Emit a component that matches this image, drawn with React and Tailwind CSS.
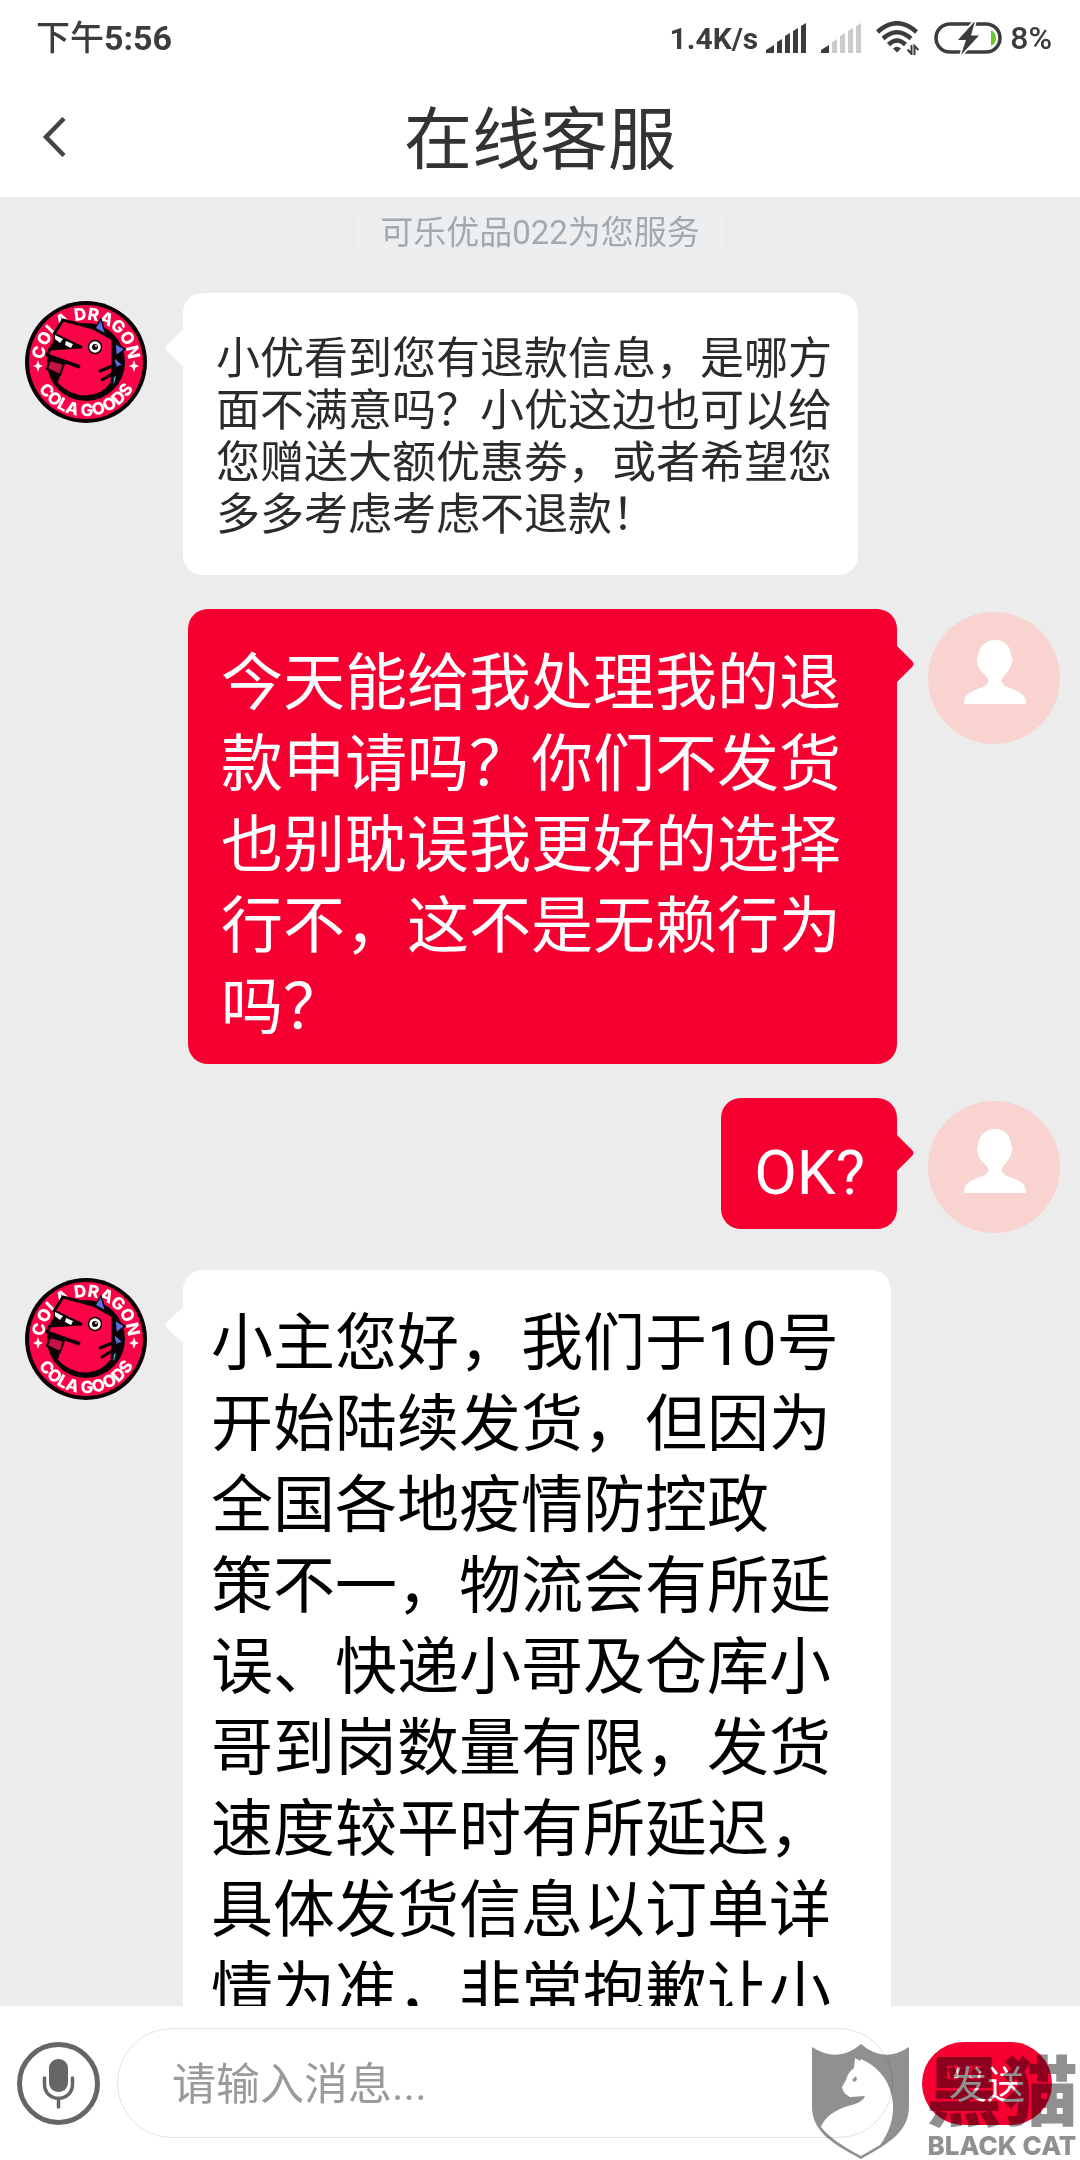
const noticeLines = ["小优看到您有退款信息，是哪方", "面不满意吗？小优这边也可以给", "您赠送大额优惠劵，或者希望您", "多多考虑考虑不退款！"];

const complaintLines = ["今天能给我处理我的退", "款申请吗？你们不发货", "也别耽误我更好的选择", "行不，这不是无赖行为", "吗？"];

const replyLines = [
  "小主您好，我们于10号",
  "开始陆续发货，但因为",
  "全国各地疫情防控政",
  "策不一，物流会有所延",
  "误、快递小哥及仓库小",
  "哥到岗数量有限，发货",
  "速度较平时有所延迟，",
  "具体发货信息以订单详",
  "情为准，非常抱歉让小",
];

const Lines = ({ lines }) => (
  <p>
    {lines.map((line) => (
      <span key={line} className="block whitespace-nowrap">
        {line}
      </span>
    ))}
  </p>
);

const Signal = ({ weak }) => (
  <svg className="h-[30px] w-10" viewBox="0 0 40 30" fill="#3c3c3c" aria-hidden="true">
    <path d="M0 30V27L8 22V30Z" />
    <g fill={weak ? "#cbcbcb" : "#3c3c3c"}>
      <path d="M11 30V19L16 16V30Z" />
      <path d="M19 30V13L24 10V30Z" />
      <path d="M27 30V8L32 5V30Z" />
      <path d="M35 30V3L40 0V30Z" />
    </g>
  </svg>
);

const Wifi = () => (
  <svg className="h-[34px] w-11" viewBox="0 0 44 34" fill="none" stroke="#3c3c3c" strokeWidth="4.500" aria-hidden="true">
    <path d="M1.500 11Q21 -6.500 40.500 11" />
    <path d="M7 17.500Q21 5 35 17.500" />
    <path d="M12.500 23.500Q21 15.500 29.500 23.500" />
    <path d="M17 27.500Q21 24 25 27.500L21 31.500Z" fill="#3c3c3c" stroke="none" />
    <path d="M35.500 24V33L31.500 28.500M38.500 34V25L42.500 29" strokeWidth="2" />
  </svg>
);

const Battery = () => (
  <svg className="h-8 w-[68px]" viewBox="0 0 68 32" aria-hidden="true">
    <rect x="2" y="2" width="64" height="28" rx="14" fill="none" stroke="#3c3c3c" strokeWidth="3.500" />
    <path d="M57 8Q62 10.500 62 16T57 24Z" fill="#6cc62f" />
    <path d="M41 -1L24 18H32L27 33L45 13.500H37Z" fill="#3c3c3c" stroke="#fff" strokeWidth="3.500" paintOrder="stroke" />
  </svg>
);

const DragonAvatar = () => (
  <svg className="size-[122px] shrink-0" viewBox="0 0 122 122" role="img" aria-label="Cola Dragon">
    <defs>
      <path id="ringTop" d="M19.300 66A42 42 0 1 1 102.700 66" />
      <path id="ringBottom" d="M6.700 56A54.500 54.500 0 1 0 115.300 56" />
    </defs>
    <circle cx="61" cy="61" r="61" fill="#0b0208" />
    <circle cx="61" cy="61" r="57" fill="#fb0347" />
    <circle cx="61" cy="61" r="39" fill="#0b0208" />
    <g fill="#fff" fontFamily="Inter, sans-serif" fontWeight="800" fontSize="17" textAnchor="middle">
      <text>
        <textPath href="#ringTop" startOffset="50%">COLA DRAGON</textPath>
      </text>
      <text>
        <textPath href="#ringBottom" startOffset="50%">COLA GOODS</textPath>
      </text>
    </g>
    <path d="M68 30L76 18L81 34ZM90 42L100 48L91 55ZM89 56L98 64L90 67Z" fill="#5d6fe0" stroke="#0b0208" strokeWidth="1.500" />
    <path d="M86 78L91 75L89 83Z" fill="#36b8cf" />
    <path d="M38 19L29 33L56 46L25 48L22 54L38 61L31 82Q44 96 61 96Q78 95 87 82L88 62L88 38L68 27Z" fill="#fb0347" stroke="#0b0208" strokeWidth="3" strokeLinejoin="round" />
    <path d="M29 33L56 46L28 47Z" fill="#0b0208" />
    <path d="M30 34L38 38L35 42L30 38ZM41 40L48 43L46 47L40 44Z" fill="#fff" />
    <path d="M24 55L55 66" fill="none" stroke="#0b0208" strokeWidth="3.500" />
    <path d="M25 59L39 63L35 74L22 68Z" fill="#c41146" stroke="#0b0208" strokeWidth="2" />
    <path d="M90 64L75 70M92 70L77 79" fill="none" stroke="#0b0208" strokeWidth="3" strokeLinecap="round" />
    <circle cx="70" cy="46" r="6.500" fill="#fff" stroke="#0b0208" strokeWidth="1.500" />
    <circle cx="70" cy="46" r="3" fill="#0b0208" />
    <circle cx="71" cy="45" r="1" fill="#fff" />
    <path d="M13 59L14.500 63.500L18 65L14.500 66.500L13 71L11.500 66.500L8 65L11.500 63.500ZM109 59L110.500 63.500L114 65L110.500 66.500L109 71L107.500 66.500L104 65L107.500 63.500Z" fill="#fff" />
  </svg>
);

const UserAvatar = () => (
  <svg className="mt-[3px] size-[132px] shrink-0" viewBox="0 0 132 132" role="img" aria-label="我">
    <circle cx="66" cy="66" r="66" fill="#f8d3d0" />
    <path d="M67 28C77 28 83 35 83 44Q86 48 83 53C81 60 77 62 74 67Q72 70 77 74C88 79 98 80 98 92H36C36 80 46 79 57 74Q62 70 60 67C57 62 52 60 50 53Q48 48 50 44C51 35 57 28 67 28Z" fill="#fff" />
  </svg>
);

const AgentMessage = ({ children, className }) => (
  <div className="flex items-start gap-9 pt-[3px] pl-[25px]">
    <div className="pt-2">
      <DragonAvatar />
    </div>
    <div className={`relative rounded-[20px] bg-white ${className}`}>
      <svg className="absolute top-9 -left-[18px] h-[38px] w-[19px]" viewBox="0 0 19 38" fill="#fff" aria-hidden="true">
        <path d="M19 0L2 16Q-1 19 2 22L19 38Z" />
      </svg>
      {children}
    </div>
  </div>
);

const UserMessage = ({ children, className }) => (
  <div className="flex items-start justify-end gap-[31px] pr-5">
    <div className={`relative rounded-[20px] bg-[#f50031] pb-4 text-[62px] leading-[81px] text-white ${className}`}>
      <svg className="absolute top-9 -right-[17px] h-[38px] w-[18px]" viewBox="0 0 18 38" fill="#f50031" aria-hidden="true">
        <path d="M0 0L16 16Q19 19 16 22L0 38Z" />
      </svg>
      {children}
    </div>
    <UserAvatar />
  </div>
);

const Watermark = () => (
  <div className="pointer-events-none absolute right-0 bottom-0 flex items-end gap-4 pr-[2px] mix-blend-multiply">
    <svg className="h-[116px] w-[98px]" viewBox="0 0 98 116" fill="#918f90" aria-hidden="true">
      <path
        fillRule="evenodd"
        d="M0 3Q26 20 49 0Q72 20 97 3V62C97 86 80 98 49 115C17 98 0 86 0 62ZM43 14L42 24Q36 28 34 36L30 43Q31 50 38 53L53 52Q51 59 36 62Q14 69 9 83Q20 97 49 112L68 101Q82 82 81 60Q78 28 49 15L48 17Z"
      />
      <path d="M40 36L44 32L45 36L42 38Z" />
    </svg>
    <div className="flex flex-col items-center text-[#918f90]">
      <span className="text-[76px] leading-[76px] font-black">黑猫</span>
      <span className="font-[Inter] text-[26px] leading-7 font-extrabold whitespace-nowrap">BLACK CAT</span>
    </div>
  </div>
);

export default function App() {
  return (
    <div className="flex h-screen flex-col overflow-hidden bg-[#ececec] font-[Roboto,'Noto_Sans_CJK_SC',sans-serif]" lang="zh-CN">
      <header className="shrink-0 bg-white">
        <div className="flex h-[76px] items-center justify-between pr-7 pl-9 text-[#3c3c3c]">
          <div className="flex items-center text-[34px]">
            <span className="font-medium">下午</span>
            <span className="font-bold">5:56</span>
          </div>
          <div className="flex items-center">
            <span className="mr-2 text-[30px] font-bold">1.4K/s</span>
            <Signal />
            <span className="w-[15px]" />
            <Signal weak />
            <span className="w-[15px]" />
            <Wifi />
            <span className="w-[14px]" />
            <Battery />
            <span className="ml-2 text-[32px] font-medium">8%</span>
          </div>
        </div>
        <div className="grid h-[121px] grid-cols-[1fr_auto_1fr] items-center px-10">
          <button type="button" aria-label="返回" className="w-8">
            <svg className="h-10 w-7" viewBox="0 0 28 40" fill="none" stroke="#444" strokeWidth="4.500">
              <path d="M24 1.500L6 20L24 38.500" />
            </svg>
          </button>
          <h1 className="pt-2 text-[68px] leading-[80px] text-[#333]">在线客服</h1>
        </div>
      </header>

      <main className="min-h-0 flex-1 overflow-hidden">
        <div className="flex justify-center pt-3">
          <p className="rounded-lg bg-[#edeeef] px-6 text-[33px] leading-[48px] text-[#a2aaaf]">可乐优品022为您服务</p>
        </div>
        <div className="flex flex-col gap-[34px] pt-[33px]">
          <AgentMessage className="pt-10 pr-[26px] pb-[34px] pl-[33px] text-[44px] leading-[52px] text-[#2b2b2b]">
            <Lines lines={noticeLines} />
          </AgentMessage>
          <UserMessage className="pt-[34px] pr-[56px] pl-[33px]">
            <Lines lines={complaintLines} />
          </UserMessage>
          <UserMessage className="pt-[34px] pr-8 pl-[33px]">
            <p>OK?</p>
          </UserMessage>
          <AgentMessage className="pt-[33px] pr-[52px] pb-4 pl-7 text-[62px] leading-[81px] text-black">
            <Lines lines={replyLines} />
          </AgentMessage>
        </div>
      </main>

      <footer className="relative flex h-[154px] shrink-0 items-center bg-white pr-7 pl-[17px]">
        <button type="button" aria-label="语音" className="shrink-0">
          <svg className="size-[83px]" viewBox="0 0 83 83" fill="none" stroke="#666" strokeWidth="3.500" strokeLinecap="round">
            <circle cx="41.500" cy="41.500" r="39" strokeWidth="5" />
            <rect x="32" y="17" width="19" height="33" rx="9" fill="#666" stroke="none" />
            <path d="M27.500 36V42C27.500 61 55.500 61 55.500 42V36M41.500 57V65" />
          </svg>
        </button>
        <input
          type="text"
          aria-label="消息"
          placeholder="请输入消息..."
          className="ml-[17px] h-[110px] min-w-0 flex-1 rounded-full border border-[#e3e3e3] bg-white px-[54px] pt-1 text-[44px] placeholder:text-[#9a9a9a]"
        />
        <button type="button" className="ml-[29px] h-[83px] w-[130px] shrink-0 rounded-full bg-[#f50031] pt-1 text-[38px] text-white">
          发送
        </button>
        <Watermark />
      </footer>
    </div>
  );
}
